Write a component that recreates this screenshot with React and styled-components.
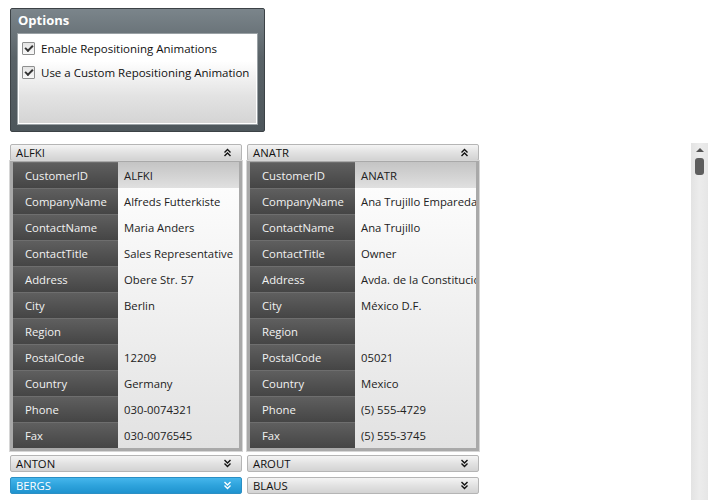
import styled, { createGlobalStyle } from "styled-components";

const GlobalStyle = createGlobalStyle`
  html, body {
    margin: 0;
    padding: 0;
    background: #fff;
    font-family: "Open Sans", "Noto Sans", sans-serif;
    font-size: 11.3px;
    color: #222;
  }
`;

const customers = [
  {
    id: "ALFKI",
    fields: [
      ["CustomerID", "ALFKI"],
      ["CompanyName", "Alfreds Futterkiste"],
      ["ContactName", "Maria Anders"],
      ["ContactTitle", "Sales Representative"],
      ["Address", "Obere Str. 57"],
      ["City", "Berlin"],
      ["Region", ""],
      ["PostalCode", "12209"],
      ["Country", "Germany"],
      ["Phone", "030-0074321"],
      ["Fax", "030-0076545"],
    ],
  },
  {
    id: "ANATR",
    fields: [
      ["CustomerID", "ANATR"],
      ["CompanyName", "Ana Trujillo Emparedados y helados"],
      ["ContactName", "Ana Trujillo"],
      ["ContactTitle", "Owner"],
      ["Address", "Avda. de la Constitución 2222"],
      ["City", "México D.F."],
      ["Region", ""],
      ["PostalCode", "05021"],
      ["Country", "Mexico"],
      ["Phone", "(5) 555-4729"],
      ["Fax", "(5) 555-3745"],
    ],
  },
];

const collapsed = ["ANTON", "AROUT", "BERGS", "BLAUS"];

const Chevrons = ({ up }) => (
  <svg width="9" height="9" viewBox="0 0 9 9">
    <g
      fill="none"
      stroke="currentColor"
      strokeWidth="1.4"
      transform={up ? undefined : "rotate(180 4.5 4.5)"}
    >
      <polyline points="1.5,4.5 4.5,1.5 7.5,4.5" />
      <polyline points="1.5,8 4.5,5 7.5,8" />
    </g>
  </svg>
);

export default function App() {
  return (
    <>
      <GlobalStyle />
      <Page>
        <OptionsPanel>
          <OptionsTitle>Options</OptionsTitle>
          <OptionsBody>
            <CheckRow>
              <CheckBox>
                <CheckMark />
              </CheckBox>
              Enable Repositioning Animations
            </CheckRow>
            <CheckRow>
              <CheckBox>
                <CheckMark />
              </CheckBox>
              Use a Custom Repositioning Animation
            </CheckRow>
          </OptionsBody>
        </OptionsPanel>

        <ListArea>
          <CardGrid>
            {customers.map((c) => (
              <Card key={c.id}>
                <CardHeader>
                  <span>{c.id}</span>
                  <Chevrons up />
                </CardHeader>
                <CardBody>
                  {c.fields.map(([label, value], i) => (
                    <FieldRow key={label}>
                      <FieldLabel>{label}</FieldLabel>
                      <FieldValue $first={i === 0}>{value}</FieldValue>
                    </FieldRow>
                  ))}
                </CardBody>
              </Card>
            ))}
            {collapsed.map((id) => (
              <CardHeader key={id} $selected={id === "BERGS"}>
                <span>{id}</span>
                <Chevrons />
              </CardHeader>
            ))}
          </CardGrid>
          <ScrollBar>
            <ScrollArrow />
            <ScrollThumb />
          </ScrollBar>
        </ListArea>
      </Page>
    </>
  );
}

const Page = styled.div`
  padding: 8px 0 0 10px;
  height: 500px;
  box-sizing: border-box;
  display: flex;
  flex-direction: column;
  overflow: hidden;
`;

const OptionsPanel = styled.div`
  flex-shrink: 0;
  width: 255px;
  height: 124px;
  box-sizing: border-box;
  border: 1px solid #3c4246;
  border-radius: 2px;
  background: linear-gradient(#7b858b, #5a6368 40%, #4d565b);
  padding: 0 6px 6px 6px;
  display: flex;
  flex-direction: column;
`;

const OptionsTitle = styled.div`
  color: #fff;
  font-weight: 700;
  font-size: 13px;
  height: 24px;
  line-height: 22px;
  padding-left: 1px;
`;

const OptionsBody = styled.div`
  flex: 1;
  border: 1px solid #9aa1a5;
  box-shadow: inset 0 0 0 1px #fff;
  background: linear-gradient(#ffffff 30%, #e2e2e2 70%, #d4d4d4);
  padding: 6px 4px;
  display: flex;
  flex-direction: column;
  gap: 8px;
`;

const CheckRow = styled.div`
  display: flex;
  align-items: center;
  gap: 6px;
  height: 16px;
  color: #111;
  white-space: nowrap;
  font-size: 11.5px;
`;

const CheckBox = styled.span`
  flex-shrink: 0;
  width: 11px;
  height: 11px;
  border: 1px solid #8e8f8f;
  border-radius: 1px;
  background: linear-gradient(#e4e4e4, #f8f8f8);
  display: flex;
  align-items: center;
  justify-content: center;
`;

const CheckMark = styled.span`
  width: 6px;
  height: 3px;
  border-left: 2px solid #333;
  border-bottom: 2px solid #333;
  transform: translateY(-1px) rotate(-45deg);
`;

const ListArea = styled.div`
  margin-top: 11px;
  flex: 1;
  display: flex;
  justify-content: space-between;
  padding-right: 7px;
`;

const CardGrid = styled.div`
  display: grid;
  grid-template-columns: 232px 232px;
  column-gap: 5px;
  row-gap: 5px;
  align-content: start;
  padding-top: 1px;
`;

const Card = styled.div`
  display: flex;
  flex-direction: column;
  margin-bottom: -1px;
`;

const CardHeader = styled.div`
  height: 17px;
  box-sizing: border-box;
  border: 1px solid ${(p) => (p.$selected ? "#2b8fc4" : "#b5b5b5")};
  border-radius: 2px;
  background: ${(p) =>
    p.$selected
      ? "linear-gradient(#45b6ec, #2ea3dc 50%, #1f93cf)"
      : "linear-gradient(#f4f4f4, #e2e2e2 50%, #d3d3d3)"};
  color: ${(p) => (p.$selected ? "#fff" : "#111")};
  display: flex;
  align-items: center;
  justify-content: space-between;
  padding: 0 9px 0 5px;
  line-height: 15px;
`;

const CardBody = styled.div`
  border: 3px solid #a9a9a9;
  border-top: 1px solid #a9a9a9;
  background: linear-gradient(#ffffff, #e2e2e2);
  box-shadow: 0 0 0 1px #d6d6d6;
  display: flex;
  flex-direction: column;
`;

const FieldRow = styled.div`
  display: grid;
  grid-template-columns: 105px 1fr;
  height: 26px;
`;

const FieldLabel = styled.div`
  background: linear-gradient(#5f5f5f, #454545);
  border-top: 1px solid #6e6e6e;
  box-sizing: border-box;
  color: #f2f2f2;
  padding-left: 12px;
  display: flex;
  align-items: center;
`;

const FieldValue = styled.div`
  padding-left: 6px;
  display: flex;
  align-items: center;
  white-space: nowrap;
  overflow: hidden;
  color: #222;
  background: ${(p) =>
    p.$first ? "linear-gradient(#c4c4c4, #e0e0e0)" : "transparent"};
`;

const ScrollBar = styled.div`
  width: 17px;
  background: linear-gradient(90deg, #e3e3e3, #ececec 50%, #e6e6e6);
  display: flex;
  flex-direction: column;
  align-items: center;
  padding-top: 5px;
  gap: 6px;
`;

const ScrollArrow = styled.div`
  width: 0;
  height: 0;
  border-left: 4px solid transparent;
  border-right: 4px solid transparent;
  border-bottom: 4px solid #555;
`;

const ScrollThumb = styled.div`
  width: 9px;
  height: 17px;
  border-radius: 3px;
  background: #5e5e5e;
`;
